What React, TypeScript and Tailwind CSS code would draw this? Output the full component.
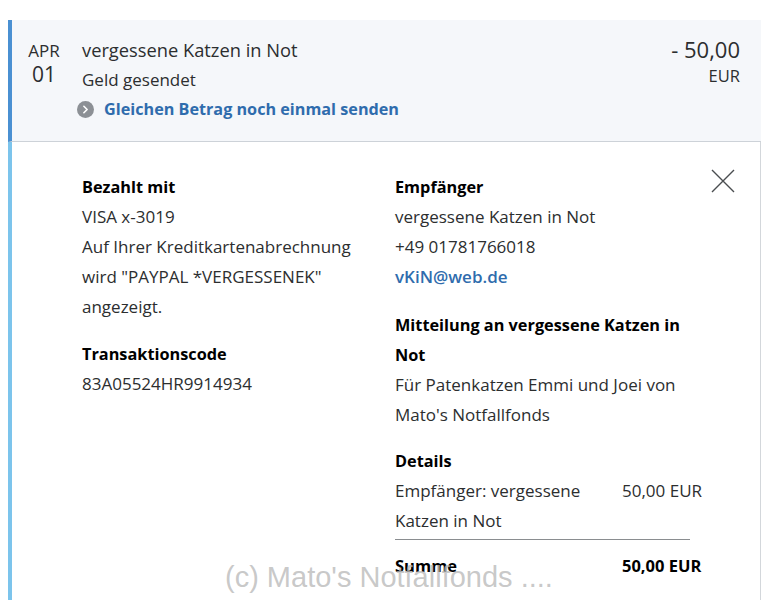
import { ChevronRight } from 'lucide-react';

const font = { fontFamily: '"Open Sans", "Noto Sans", sans-serif' };

function Section({
  title,
  children,
  className = '',
}: {
  title: string;
  children: React.ReactNode;
  className?: string;
}) {
  return (
    <div className={className}>
      <h3 className="font-bold text-black text-[16.3px]">{title}</h3>
      {children}
    </div>
  );
}

export default function App() {
  return (
    <div
      className="relative min-h-[600px] bg-white pt-5 pl-2 w-[773px] overflow-hidden text-[17px] leading-[30px] text-[#2c2e2f]"
      style={font}
    >
      <div className="w-[753px]">
        {/* Kopfzeile */}
        <div className="flex h-[122px] bg-[#f5f7fa] border-l-4 border-[#4a90d2] border-b border-b-[#cdd2d8]">
          <div className="w-[64px] pt-[20px] flex flex-col items-center text-[#2c2e2f]">
            <span className="text-[17px] leading-[22px]">APR</span>
            <span className="text-[21px] leading-[24px]">01</span>
          </div>
          <div className="ml-[6px] pt-[16px] flex-1">
            <div className="text-[18.3px] leading-[28px]">vergessene Katzen in Not</div>
            <div className="text-[17px] leading-[28px] mt-[2px]">Geld gesendet</div>
            <div className="flex items-center -ml-[5px] mt-[3px]">
              <span className="flex items-center justify-center w-[17px] h-[17px] rounded-full bg-[#8c9095]">
                <ChevronRight className="w-[13px] h-[13px] text-white" strokeWidth={3} />
              </span>
              <span className="ml-[10px] font-bold text-[16.2px] text-[#2f6cad] leading-[24px]">
                Gleichen Betrag noch einmal senden
              </span>
            </div>
          </div>
          <div className="pr-[21px] pt-[15px] flex flex-col items-end">
            <span className="text-[22px] leading-[28px]">- 50,00</span>
            <span className="text-[16.5px] leading-[26px]">EUR</span>
          </div>
        </div>

        {/* Details */}
        <div className="relative flex bg-white border-l-4 border-[#7cc4ec] border-r border-r-[#d3d7db] pt-[30px] pb-[60px]">
          <button className="absolute right-[25px] top-[27px] text-[#4a4d50]">
            <svg width="24" height="24" viewBox="0 0 24 24" fill="none" stroke="currentColor" strokeWidth="1.4">
              <path d="M1 1 L23 23 M23 1 L1 23" />
            </svg>
          </button>

          <div className="w-[383px] pl-[70px]">
            <Section title="Bezahlt mit">
              <p>VISA x-3019</p>
              <p className="w-[290px]">
                Auf Ihrer Kreditkartenabrechnung wird "PAYPAL *VERGESSENEK" angezeigt.
              </p>
            </Section>
            <Section title="Transaktionscode" className="mt-[17px]">
              <p>83A05524HR9914934</p>
            </Section>
          </div>

          <div className="w-[320px]">
            <Section title="Empfänger">
              <p>vergessene Katzen in Not</p>
              <p>+49 01781766018</p>
              <p className="font-semibold text-[#2f6cad]">vKiN@web.de</p>
            </Section>
            <Section title="Mitteilung an vergessene Katzen in Not" className="mt-[18px] w-[305px]">
              <p>Für Patenkatzen Emmi und Joei von Mato's Notfallfonds</p>
            </Section>
            <Section title="Details" className="mt-[16px]">
              <div className="flex">
                <p className="w-[227px] pr-4">Empfänger: vergessene Katzen in Not</p>
                <p>50,00 EUR</p>
              </div>
              <div className="w-[295px] h-px bg-[#8a8d90] mt-[3px]" />
              <div className="flex mt-[11px] font-bold text-black text-[16.5px]">
                <p className="w-[227px]">Summe</p>
                <p>50,00 EUR</p>
              </div>
            </Section>
          </div>
        </div>
      </div>

      {/* Wasserzeichen */}
      <div
        className="absolute left-[225px] top-[557px] text-[29px] leading-[40px] text-[#bababa]/80 whitespace-nowrap pointer-events-none"
        style={{ fontFamily: '"Liberation Sans", Arial, sans-serif' }}
      >
        (c) Mato's Notfallfonds ....
      </div>
    </div>
  );
}
